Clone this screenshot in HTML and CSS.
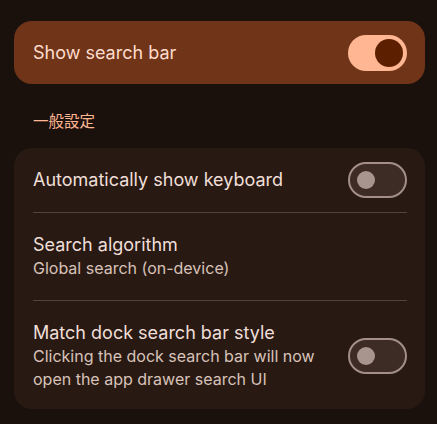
FILE: index.html
```html
<!DOCTYPE html>
<html>
<head>
    <meta charset="UTF-8">
    <meta name="viewport" content="width=device-width, initial-scale=1.0">
    <title>Search settings</title>
    <link rel="stylesheet" href="styles.css">
</head>
<body>
<div class="page">

    <!-- Main toggle -->
    <div class="main-card">
        <span class="main-title">Show search bar</span>
        <span class="switch on"><span class="thumb"></span></span>
    </div>

    <div class="section-title">一般設定</div>

    <!-- General settings -->
    <div class="card">
        <div class="row single">
            <div class="text">
                <div class="title">Automatically show keyboard</div>
            </div>
            <span class="switch"><span class="thumb"></span></span>
        </div>
        <div class="row">
            <div class="text">
                <div class="title">Search algorithm</div>
                <div class="subtitle">Global search (on-device)</div>
            </div>
        </div>
        <div class="row last">
            <div class="text">
                <div class="title">Match dock search bar style</div>
                <div class="subtitle">Clicking the dock search bar will now open the app drawer search UI</div>
            </div>
            <span class="switch"><span class="thumb"></span></span>
        </div>
    </div>

</div>
</body>
</html>
```

FILE: styles.css
```css
html, body {
    margin: 0;
    height: 100%;
    background-color: #1b110c;
    overflow: hidden;
}

body {
    font-family: Inter, "Noto Sans CJK JP", sans-serif;
    color: #f0dfd8;
}

.page {
    padding: 21px 12px 0 14px;
}

/* Top highlighted card */
.main-card {
    display: flex;
    align-items: center;
    justify-content: space-between;
    height: 63px;
    padding: 0 18px 0 19px;
    background-color: #703519;
    border-radius: 18px;
}

.main-title {
    font-size: 18px;
    color: #ffdbcc;
}

.section-title {
    padding: 26px 0 18px 19px;
    font-family: "Noto Sans CJK JP", sans-serif;
    font-size: 15.5px;
    line-height: 20px;
    color: #ffb693;
}

/* Settings group */
.card {
    background-color: #281a13;
    border-radius: 18px;
    padding: 0 18px 0 19px;
}

.row {
    display: flex;
    align-items: center;
    gap: 24px;
    padding: 20px 0 20px;
    border-bottom: 1px solid #54433b;
}

.row.single {
    padding: 14px 0;
}

.row.last {
    border-bottom: none;
    padding-bottom: 18px;
}

.text {
    flex: 1;
}

.title {
    font-size: 18px;
    line-height: 24px;
}

.subtitle {
    font-size: 16px;
    line-height: 23px;
    color: #d8c2b9;
}

/* Material style switch */
.switch {
    flex: none;
    position: relative;
    box-sizing: border-box;
    width: 59px;
    height: 36px;
    border-radius: 18px;
    border: 2px solid #a38f87;
    background-color: #3c2c25;
}

.switch .thumb {
    position: absolute;
    left: 7px;
    top: 7px;
    width: 18px;
    height: 18px;
    border-radius: 50%;
    background-color: #a8958d;
}

.switch.on {
    border: none;
    background-color: #ffb693;
}

.switch.on .thumb {
    left: auto;
    right: 4px;
    top: 4px;
    width: 28px;
    height: 28px;
    background-color: #5c2000;
}
```
